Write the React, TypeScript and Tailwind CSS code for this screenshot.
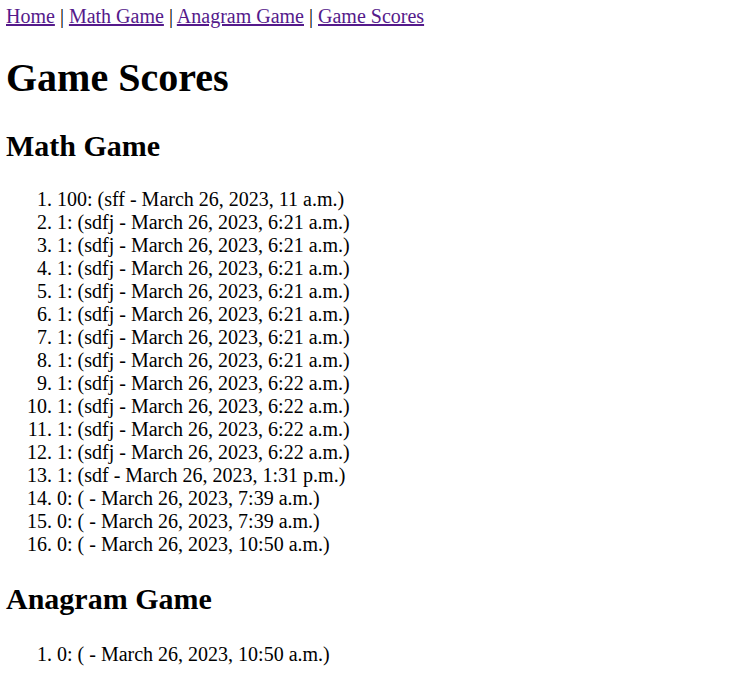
const mathScores = [
  "100: (sff - March 26, 2023, 11 a.m.)",
  "1: (sdfj - March 26, 2023, 6:21 a.m.)",
  "1: (sdfj - March 26, 2023, 6:21 a.m.)",
  "1: (sdfj - March 26, 2023, 6:21 a.m.)",
  "1: (sdfj - March 26, 2023, 6:21 a.m.)",
  "1: (sdfj - March 26, 2023, 6:21 a.m.)",
  "1: (sdfj - March 26, 2023, 6:21 a.m.)",
  "1: (sdfj - March 26, 2023, 6:21 a.m.)",
  "1: (sdfj - March 26, 2023, 6:22 a.m.)",
  "1: (sdfj - March 26, 2023, 6:22 a.m.)",
  "1: (sdfj - March 26, 2023, 6:22 a.m.)",
  "1: (sdfj - March 26, 2023, 6:22 a.m.)",
  "1: (sdf - March 26, 2023, 1:31 p.m.)",
  "0: ( - March 26, 2023, 7:39 a.m.)",
  "0: ( - March 26, 2023, 7:39 a.m.)",
  "0: ( - March 26, 2023, 10:50 a.m.)",
];

const anagramScores = ["0: ( - March 26, 2023, 10:50 a.m.)"];

const App = () => {
  return (
    <div className="min-h-screen bg-white px-[6px] pt-[5px] text-black text-[20px] leading-[23px] font-['Liberation_Serif',serif]">
      <nav>
        <a href="#" className="underline text-[#551a8b]">Home</a> |{" "}
        <a href="#" className="underline text-[#551a8b]">Math Game</a> |{" "}
        <a href="#" className="underline text-[#551a8b]">Anagram Game</a> |{" "}
        <a href="#" className="underline text-[#551a8b]">Game Scores</a>
      </nav>

      <h1 className="mt-[27px] text-[40px] leading-[46px] font-bold">Game Scores</h1>

      <h2 className="mt-[27px] text-[30px] leading-[35px] font-bold">Math Game</h2>
      <ol className="mt-[25px] list-decimal pl-[51px]">
        {mathScores.map((s, i) => (
          <li key={i}>{s}</li>
        ))}
      </ol>

      <h2 className="mt-[25px] text-[30px] leading-[35px] font-bold">Anagram Game</h2>
      <ol className="mt-[27px] list-decimal pl-[51px]">
        {anagramScores.map((s, i) => (
          <li key={i}>{s}</li>
        ))}
      </ol>
    </div>
  );
};

export default App;
